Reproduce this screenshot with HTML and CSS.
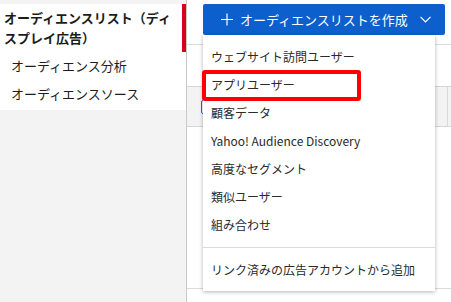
FILE: index.html
```html
<!DOCTYPE html>
<html>
<head>
    <title>オーディエンスリスト</title>
    <link rel="stylesheet" href="styles.css">
</head>
<body>
  <div class="page">
      <aside class="sidebar">
          <nav class="side-nav">
              <a class="side-item active">オーディエンスリスト（ディスプレイ広告）</a>
              <a class="side-item sub">オーディエンス分析</a>
              <a class="side-item sub">オーディエンスソース</a>
          </nav>
      </aside>

      <main class="main">
          <div class="toolbar">
              <button class="create-btn">
                  <svg class="plus" width="12" height="13" viewBox="0 0 12 13">
                      <path d="M6 0.5V12.5M0 6.5H12" stroke="#fff" stroke-width="1.2" fill="none"/>
                  </svg>
                  <span>オーディエンスリストを作成</span>
                  <svg class="chevron" width="11" height="7" viewBox="0 0 11 7">
                      <path d="M0.5 0.8L5.5 5.8L10.5 0.8" stroke="#fff" stroke-width="1.2" fill="none"/>
                  </svg>
              </button>
          </div>
          <div class="filter-row"></div>
          <div class="table">
              <div class="thead">
                  <span class="check"></span>
                  <span class="col-end"></span>
              </div>
              <div class="tbody"></div>
          </div>

          <!-- dropdown opened from the create button -->
          <ul class="menu">
              <li>ウェブサイト訪問ユーザー</li>
              <li class="marked">アプリユーザー<span class="mark"></span></li>
              <li>顧客データ</li>
              <li>Yahoo! Audience Discovery</li>
              <li>高度なセグメント</li>
              <li>類似ユーザー</li>
              <li>組み合わせ</li>
              <li class="divider"></li>
              <li>リンク済みの広告アカウントから追加</li>
          </ul>
      </main>
  </div>
</body>
</html>
```

FILE: styles.css
```css
  body {
      margin: 0;
      font-family: "Noto Sans CJK JP", "Noto Sans", sans-serif;
      color: #222;
      background-color: #fff;
  }

  .page {
      display: flex;
      height: 302px;
      overflow: hidden;
  }

  /* left navigation */
  .sidebar {
      width: 186px;
      flex-shrink: 0;
      padding-top: 4px;
      background-color: #f3f3f3;
      border-right: 1px solid #c9c9c9;
  }

  .side-nav {
      display: flex;
      flex-direction: column;
      padding-bottom: 2px;
      background-color: #fff;
  }

  .side-item {
      display: block;
      font-size: 13px;
      color: #1c1c1c;
  }

  .side-item.active {
      padding: 4px 8px 4px 4px;
      line-height: 20px;
      font-weight: bold;
      border-right: 4px solid #d7001d;
  }

  .side-item.sub {
      padding-left: 11px;
      height: 28px;
      line-height: 28px;
  }

  /* main area */
  .main {
      flex: 1;
      position: relative;
      display: flex;
      flex-direction: column;
  }

  .toolbar {
      height: 40px;
      padding: 4px 0 0 16px;
      border-bottom: 1px solid #dcdcdc;
  }

  .create-btn {
      display: flex;
      align-items: center;
      width: 242px;
      height: 31px;
      padding: 0 14px 0 18px;
      border: none;
      border-radius: 2px;
      background-color: #0c5fcc;
      color: #fff;
      font-family: inherit;
      font-size: 13px;
  }

  .create-btn .plus {
      margin-right: 7px;
  }

  .create-btn .chevron {
      margin-left: auto;
  }

  .filter-row {
      height: 41px;
  }

  .thead {
      position: relative;
      height: 39px;
      background-color: #f3f3f3;
      border-top: 1px solid #d6d6d6;
      border-bottom: 1px solid #d6d6d6;
  }

  .check {
      position: absolute;
      left: 14px;
      top: 13px;
      width: 12px;
      height: 12px;
      border: 1px solid #1a6fd6;
      border-radius: 2px;
      background-color: #fff;
  }

  .col-end {
      position: absolute;
      left: 260px;
      top: 0;
      bottom: 0;
      border-left: 1px solid #dadada;
  }

  .tbody {
      height: 161px;
      border-bottom: 1px solid #dcdcdc;
  }

  /* dropdown */
  .menu {
      position: absolute;
      left: 16px;
      top: 35px;
      width: 232px;
      margin: 0;
      padding: 8px 0 7px;
      list-style: none;
      background-color: #fff;
      box-shadow: 0 1px 4px rgba(0, 0, 0, 0.3);
  }

  .menu li {
      position: relative;
      height: 28px;
      line-height: 28px;
      padding-left: 8px;
      font-size: 12px;
      color: #2a2a2a;
      white-space: nowrap;
  }

  .menu li.divider {
      height: 0;
      margin: 8px 0;
      border-top: 1px solid #dcdcdc;
  }

  .mark {
      position: absolute;
      left: -1px;
      top: -1px;
      width: 151px;
      height: 23px;
      border: 4px solid #ff0000;
      border-radius: 3px;
  }
```
